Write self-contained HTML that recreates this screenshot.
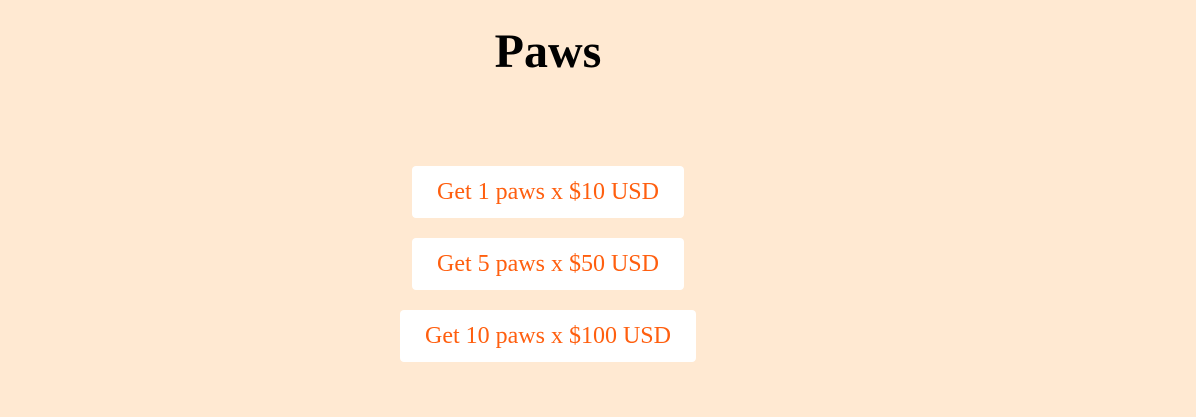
<!DOCTYPE html>
<html><head><style>
html,body{margin:0;padding:0;background:#ffe9d2;width:1196px;height:417px;overflow:hidden;font-family:"Liberation Serif",serif;}
h1{position:absolute;left:0;width:1096px;top:22px;margin:0;text-align:center;font-size:48px;font-weight:bold;line-height:60px;color:#000;}
.b{position:absolute;height:52px;background:#fff;border-radius:4px;color:#ff5f0f;font-size:24px;line-height:52px;text-align:center;}
</style></head><body>
<h1>Paws</h1>
<div class="b" style="left:412px;top:166px;width:272px">Get 1 paws x $10 USD</div>
<div class="b" style="left:412px;top:238px;width:272px">Get 5 paws x $50 USD</div>
<div class="b" style="left:400px;top:310px;width:296px">Get 10 paws x $100 USD</div>
</body></html>
